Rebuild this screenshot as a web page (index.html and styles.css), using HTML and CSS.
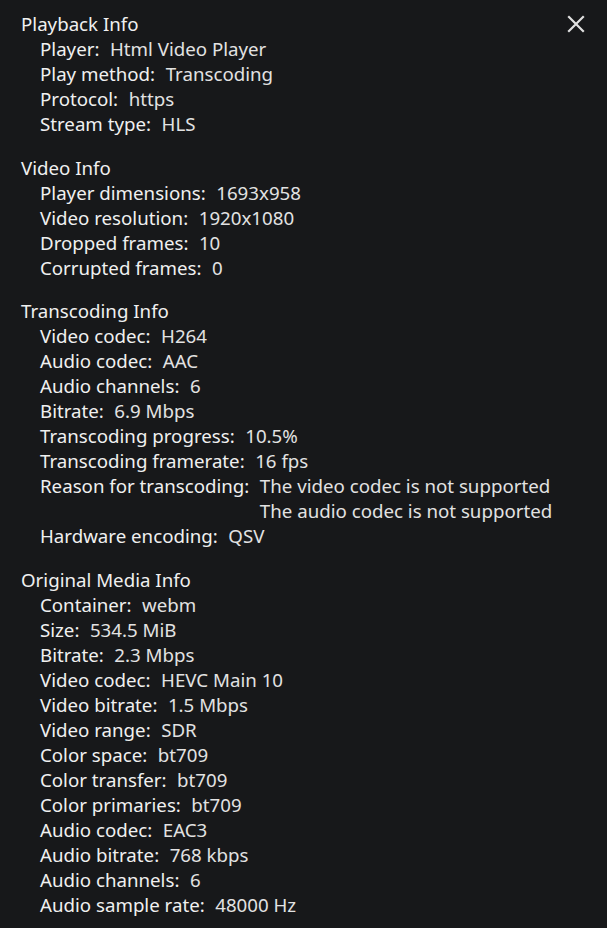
FILE: index.html
```html
<!DOCTYPE html>
<html>
<head>
<meta charset="utf-8">
<link rel="stylesheet" href="styles.css">
</head>
<body>
<div class="stats">
  <button class="close" aria-label="Close">
    <svg viewBox="0 0 18 18" width="18" height="18"><path d="M2 2L16 16M16 2L2 16" stroke="currentColor" stroke-width="2.2" fill="none" stroke-linecap="square"/></svg>
  </button>

  <div class="category">
    <div class="cat-title">Playback Info</div>
    <div class="stat"><div class="label">Player:</div><div class="value">Html Video Player</div></div>
    <div class="stat"><div class="label">Play method:</div><div class="value">Transcoding</div></div>
    <div class="stat"><div class="label">Protocol:</div><div class="value">https</div></div>
    <div class="stat"><div class="label">Stream type:</div><div class="value">HLS</div></div>
  </div>

  <div class="category">
    <div class="cat-title">Video Info</div>
    <div class="stat"><div class="label">Player dimensions:</div><div class="value">1693x958</div></div>
    <div class="stat"><div class="label">Video resolution:</div><div class="value">1920x1080</div></div>
    <div class="stat"><div class="label">Dropped frames:</div><div class="value">10</div></div>
    <div class="stat"><div class="label">Corrupted frames:</div><div class="value">0</div></div>
  </div>

  <div class="category">
    <div class="cat-title">Transcoding Info</div>
    <div class="stat"><div class="label">Video codec:</div><div class="value">H264</div></div>
    <div class="stat"><div class="label">Audio codec:</div><div class="value">AAC</div></div>
    <div class="stat"><div class="label">Audio channels:</div><div class="value">6</div></div>
    <div class="stat"><div class="label">Bitrate:</div><div class="value">6.9 Mbps</div></div>
    <div class="stat"><div class="label">Transcoding progress:</div><div class="value">10.5%</div></div>
    <div class="stat"><div class="label">Transcoding framerate:</div><div class="value">16 fps</div></div>
    <div class="stat"><div class="label">Reason for transcoding:</div><div class="value">The video codec is not supported<br>The audio codec is not supported</div></div>
    <div class="stat"><div class="label">Hardware encoding:</div><div class="value">QSV</div></div>
  </div>

  <div class="category">
    <div class="cat-title">Original Media Info</div>
    <div class="stat"><div class="label">Container:</div><div class="value">webm</div></div>
    <div class="stat"><div class="label">Size:</div><div class="value">534.5 MiB</div></div>
    <div class="stat"><div class="label">Bitrate:</div><div class="value">2.3 Mbps</div></div>
    <div class="stat"><div class="label">Video codec:</div><div class="value">HEVC Main 10</div></div>
    <div class="stat"><div class="label">Video bitrate:</div><div class="value">1.5 Mbps</div></div>
    <div class="stat"><div class="label">Video range:</div><div class="value">SDR</div></div>
    <div class="stat"><div class="label">Color space:</div><div class="value">bt709</div></div>
    <div class="stat"><div class="label">Color transfer:</div><div class="value">bt709</div></div>
    <div class="stat"><div class="label">Color primaries:</div><div class="value">bt709</div></div>
    <div class="stat"><div class="label">Audio codec:</div><div class="value">EAC3</div></div>
    <div class="stat"><div class="label">Audio bitrate:</div><div class="value">768 kbps</div></div>
    <div class="stat"><div class="label">Audio channels:</div><div class="value">6</div></div>
    <div class="stat"><div class="label">Audio sample rate:</div><div class="value">48000 Hz</div></div>
  </div>
</div>
</body>
</html>
```
FILE: styles.css
```css
html, body {
  margin: 0;
  padding: 0;
  background: #17181a;
  height: 100%;
}
body {
  font-family: "Noto Sans", "Open Sans", sans-serif;
  font-size: 18.7px;
  line-height: 25px;
  color: #f0f0f0;
}
.stats {
  position: relative;
  padding: 11px 21px 0 21px;
  display: flex;
  flex-direction: column;
  gap: 18.6px;
}
.close {
  position: absolute;
  top: 15px;
  right: 22px;
  background: none;
  border: 0;
  padding: 0;
  color: #e0e0e0;
  width: 18px;
  height: 18px;
}
.close svg { display: block; }
.stat {
  display: flex;
  padding-left: 19px;
}
.label {
  margin-right: 10.5px;
}
.value {
  color: #e2e2e2;
}
```
